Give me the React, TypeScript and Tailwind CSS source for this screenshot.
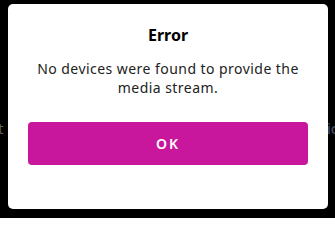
const ErrorModal = () => {
  return (
    <div className="absolute left-[8px] top-[4px] w-[320px] h-[205px] bg-white rounded-[5px] flex flex-col items-center px-[20px]">
      <h2 className="mt-[21px] text-[16px] leading-[20px] font-bold text-black">Error</h2>
      <p className="mt-[14px] text-[14px] leading-[19px] text-[#222] text-center tracking-[0.45px]">
        No devices were found to provide the
        <br />
        media stream.
      </p>
      <button className="mt-[25px] w-full h-[43px] rounded-[4px] bg-[#c8179c] text-white text-[14px] font-semibold tracking-[2px]">
        OK
      </button>
    </div>
  );
};

const App = () => {
  return (
    <div
      className="relative w-[335px] h-[218px] bg-black overflow-hidden"
      style={{ fontFamily: '"Noto Sans", "Open Sans", sans-serif' }}
    >
      {/* contenido de fondo, tapado por el modal */}
      <div className="flex justify-between items-center pt-[119px] text-[15px] leading-[18px]">
        <span className="ml-[-2px] text-[#5f6368]">t</span>
        <span className="mr-[-3px] text-[#4a5872]">ic</span>
      </div>
      <ErrorModal />
    </div>
  );
};

export default App;
